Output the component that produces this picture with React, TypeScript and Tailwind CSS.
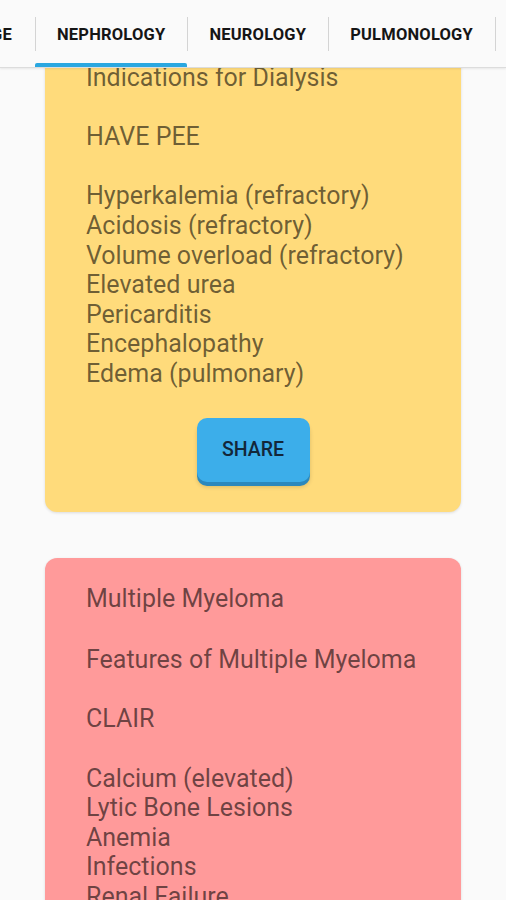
import React from 'react';

const TABS = ['Triage', 'Nephrology', 'Neurology', 'Pulmonology', 'Rheumatology'];

const CARDS = [
  {
    title: '',
    body: 'Indications for Dialysis\n\nHAVE PEE\n\nHyperkalemia (refractory)\nAcidosis (refractory)\nVolume overload (refractory)\nElevated urea\nPericarditis\nEncephalopathy\nEdema (pulmonary)',
    color: 'bg-[#ffdb7b]',
  },
  {
    title: 'Multiple Myeloma',
    body: 'Features of Multiple Myeloma\n\nCLAIR\n\nCalcium (elevated)\nLytic Bone Lesions\nAnemia\nInfections\nRenal Failure',
    color: 'bg-[#ff9a9a]',
  },
];

const App: React.FC = () => {
  return (
    <div className="w-[506px] h-[900px] overflow-hidden bg-[#fafafa] flex flex-col font-['Roboto',sans-serif]">
      {/* Tab bar, scrolled so Nephrology is in view */}
      <div className="h-[68px] flex-none flex items-stretch bg-[#fafafa] border-b border-[#dcdcdc] shadow-[0_1px_2px_rgba(0,0,0,0.08)] relative z-10 overflow-hidden">
        {TABS.map((tab, idx) => {
          const active = idx === 1;
          if (idx === 0) {
            return (
              <div key={tab} className="w-[35px] flex-none flex justify-end items-center overflow-hidden pr-[23px] pt-[4px]">
                <span className="text-[16.5px] font-bold tracking-[0.2px] text-[#151515] uppercase whitespace-nowrap">{tab}</span>
              </div>
            );
          }
          return (
            <div key={tab} className="flex-none relative flex items-center pt-[4px]">
              <div className="w-px h-[34px] bg-[#d4d4d4] absolute left-0 top-[17px]"></div>
              <span className="px-[22px] text-[16.5px] font-bold tracking-[0.2px] text-[#151515] uppercase whitespace-nowrap">
                {tab}
              </span>
              {active && (
                <div className="absolute left-0 right-0 bottom-0 h-[4px] bg-[#2aa7e0] rounded-t-[2px]"></div>
              )}
            </div>
          );
        })}
      </div>

      {/* Scrolled content */}
      <div className="flex-1 overflow-hidden">
        <div className="-mt-[31px] flex flex-col gap-[46px] px-[45px]">
          {CARDS.map((card, idx) => (
            <div
              key={idx}
              className={`${card.color} rounded-[12px] shadow-[0_1px_3px_rgba(0,0,0,0.12)] pt-[26px] pl-[41px] pr-[20px] ${idx === 0 ? 'pb-[30px]' : 'pb-[40px]'}`}
            >
              {card.title && (
                <div className="mb-[32px] text-[25px] leading-[29.6px] text-black/[0.58]">{card.title}</div>
              )}
              <div className="text-[25px] leading-[29.6px] text-black/[0.58] whitespace-pre-line">
                {card.body}
              </div>
              {idx === 0 && (
                <div className="flex justify-center mt-[29px] pr-[21px]">
                  <button className="w-[113px] h-[64px] rounded-[10px] bg-[#3caeea] shadow-[0_4px_0_#2b88bd,0_5px_4px_rgba(0,0,0,0.15)] text-[19.5px] font-medium text-[#13273a] uppercase">
                    Share
                  </button>
                </div>
              )}
            </div>
          ))}
        </div>
      </div>
    </div>
  );
};

export default App;
